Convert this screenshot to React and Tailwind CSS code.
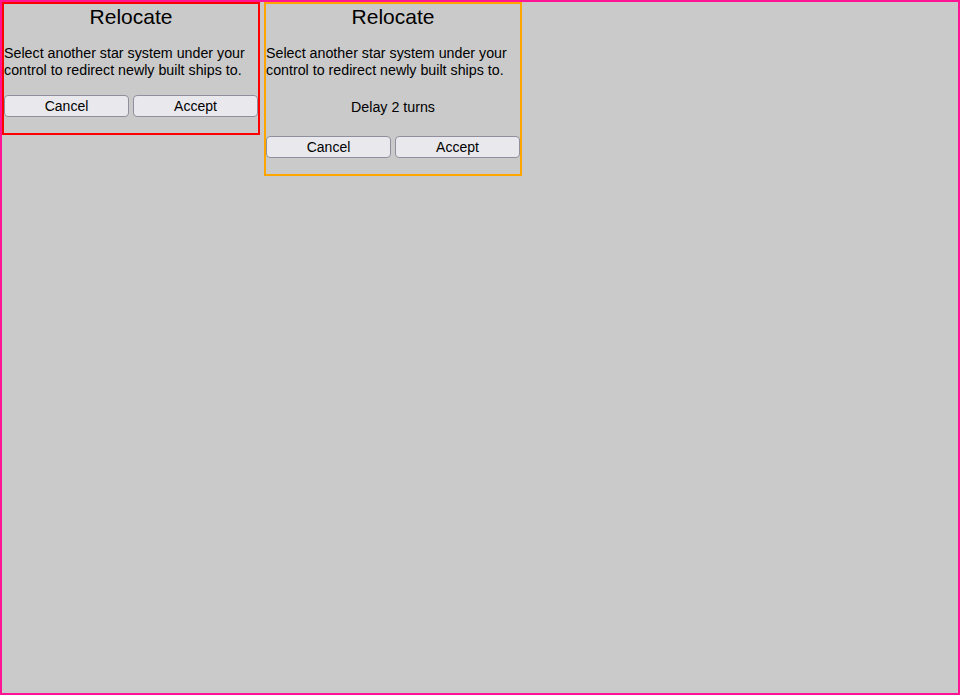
export default function App() {
  const font = { fontFamily: '"Liberation Sans", Arial, sans-serif' };
  const Btn = ({ children }) => (
    <button className="w-[125px] h-[22px] bg-[#e9e9ed] border border-[#8f8f9d] rounded-[4px] text-[14px] text-black leading-none">
      {children}
    </button>
  );
  const Panel = ({ color, delay }) => (
    <div className={`w-[258px] border-2 ${color} pb-[16px]`}>
      <div className="pt-[1px] text-center text-[21px] leading-[24px] text-black">Relocate</div>
      <div className="mt-[16px] text-[14.25px] leading-[17px] text-black">
        Select another star system under your control to redirect newly built ships to.
      </div>
      {delay && (
        <div className="mt-[20px] text-center text-[14.25px] leading-[17px] text-black">Delay 2 turns</div>
      )}
      <div className={`${delay ? "mt-[20px]" : "mt-[16px]"} flex gap-[4px]`}>
        <Btn>Cancel</Btn>
        <Btn>Accept</Btn>
      </div>
    </div>
  );
  return (
    <div style={font} className="w-[960px] h-[695px] bg-[#cacaca] border-2 border-[#ff1493] box-border overflow-hidden">
      <div className="flex items-start gap-[4px]">
        <Panel color="border-[#ff0000]" />
        <Panel color="border-[#ffa500]" delay />
      </div>
    </div>
  );
}
